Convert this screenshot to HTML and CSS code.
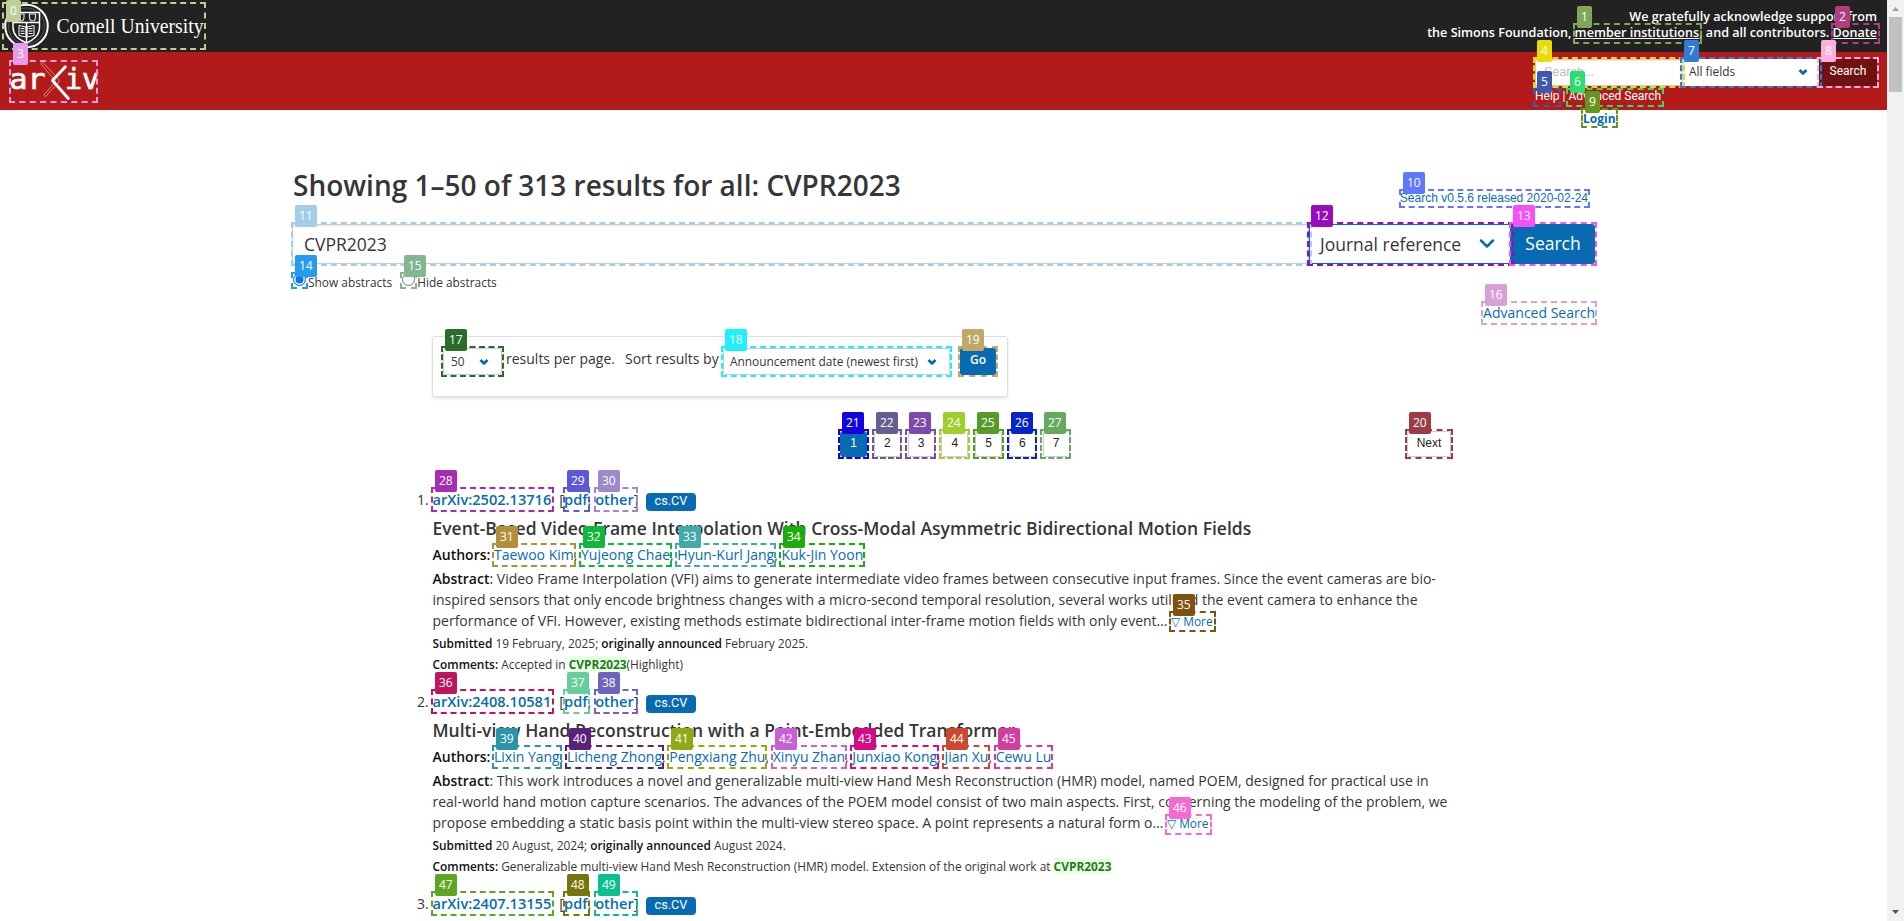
FILE: index.html
```html
<!DOCTYPE html>
<html lang="en">
<head>
<meta charset="utf-8">
<title>Search | arXiv e-print repository</title>
<link rel="stylesheet" href="styles.css">
</head>
<body>
<div class="viewport">
<div class="page">
  <header class="top-bar">
    <svg class="cornell" width="204" height="48" viewBox="2 2 204 48" role="img" aria-label="Cornell University">
      <circle cx="26.500" cy="26" r="21.300" fill="none" stroke="#fff" stroke-width="2"/>
      <circle cx="26.500" cy="26" r="18" fill="none" stroke="#666" stroke-width=".7"/>
      <path d="M13 12.500H39.500V27C39.500 36 33 40 26.500 43C19 40 13 36 13 27Z" fill="none" stroke="#fff" stroke-width="1.500"/>
      <path d="M13 22.500H39.500M26.500 23V43" stroke="#fff" stroke-width="1.500"/>
      <path d="M18 14h6v3q0 4-3 4t-3-4zM29.500 14h6v3q0 4-3 4t-3-4z" fill="none" stroke="#ddd" stroke-width="1.200"/>
      <path d="M19 25.500L26 27V37L19 35.500ZM34 25.500L27 27V37L34 35.500Z" fill="none" stroke="#fff"/>
      <path d="M20.500 28.500h4M20.500 31h4M20.500 33.500h4M28.500 28.500h4M28.500 31h4M28.500 33.500h4" stroke="#fff"/>
      <text x="56.500" y="33" textLength="147" lengthAdjust="spacingAndGlyphs" class="cornell-name">Cornell University</text>
    </svg>
    <p class="sponsors">We gratefully acknowledge support from<br>the Simons Foundation, <a href="#">member institutions</a>, and all contributors. <a href="#">Donate</a></p>
  </header>
  <div class="brand-bar">
    <svg class="arxiv" width="90" height="44" viewBox="9 60 90 44" role="img" aria-label="arXiv">
      <text x="9.500" y="88.500" textLength="36" lengthAdjust="spacingAndGlyphs" class="arxiv-name">ar</text>
      <text x="65" y="88.500" textLength="34" lengthAdjust="spacingAndGlyphs" class="arxiv-name">iv</text>
      <path d="M40.700 63.500L42.700 62.300L59.300 80L58.800 82L45.500 96.700L43.800 95.300L55.500 81.500Z" fill="none" stroke="#e59a9a" stroke-width=".8"/>
      <path d="M65.300 66.700L52.500 80.500L68.300 98.500" fill="none" stroke="#fff" stroke-width="2.900" stroke-linecap="round" stroke-linejoin="round"/>
    </svg>
    <form class="mini-search">
      <div class="mini-fields">
        <span class="mini-input">Search...</span>
        <span class="mini-select">All fields<svg width="10" height="8" viewBox="0 0 10 8"><path d="M1.500 2L5 5.500L8.500 2" class="chevron small"/></svg></span>
        <span class="mini-button">Search</span>
      </div>
      <p class="mini-help"><a href="#">Help</a> | <a href="#">Advanced Search</a></p>
    </form>
  </div>
  <div class="login"><a href="#">Login</a></div>

  <main class="container">
    <div class="heading">
      <h1>Showing 1–50 of 313 results for all: CVPR2023</h1>
      <a class="version" href="#">Search v0.5.6 released 2020-02-24</a>
    </div>
    <div class="search-row">
      <span class="query">CVPR2023</span>
      <span class="field-select">Journal reference<svg width="16" height="10" viewBox="0 0 16 10"><path d="M2 1.500L8 7.500L14 1.500" class="chevron"/></svg></span>
      <span class="search-button">Search</span>
    </div>
    <div class="options">
      <div class="radios">
        <span class="radio checked"></span><span class="show">Show abstracts</span>
        <span class="radio"></span><span>Hide abstracts</span>
      </div>
      <a class="advanced" href="#">Advanced Search</a>
    </div>

    <section class="results">
      <div class="sort-box">
        <span class="select per-page">50<svg width="10" height="8" viewBox="0 0 10 8"><path d="M1.500 2L5 5.500L8.500 2" class="chevron small"/></svg></span>
        <span class="sort-text per">results per page.</span>
        <span class="sort-text by">Sort results by</span>
        <span class="select order">Announcement date (newest first)<svg width="10" height="8" viewBox="0 0 10 8"><path d="M1.500 2L5 5.500L8.500 2" class="chevron small"/></svg></span>
        <span class="go">Go</span>
      </div>
      <nav class="pagination">
        <div class="pages">
          <a class="current">1</a><a>2</a><a>3</a><a>4</a><a>5</a><a>6</a><a>7</a>
        </div>
        <a class="next">Next</a>
      </nav>

      <article class="result">
        <span class="num">1.</span>
        <p class="ids"><a href="#">arXiv:2502.13716</a><span class="formats">[<a href="#">pdf</a>, <a href="#">other</a>]</span><span class="tag">cs.CV</span></p>
        <h2>Event-Based Video Frame Interpolation With Cross-Modal Asymmetric Bidirectional Motion Fields</h2>
        <p class="authors"><b>Authors:</b> <a href="#">Taewoo Kim</a>, <a href="#">Yujeong Chae</a>, <a href="#">Hyun-Kurl Jang</a>, <a href="#">Kuk-Jin Yoon</a></p>
        <p class="abstract"><b>Abstract</b>: Video Frame Interpolation (VFI) aims to generate intermediate video frames between consecutive input frames. Since the event cameras are bio-<br>inspired sensors that only encode brightness changes with a micro-second temporal resolution, several works utilized the event camera to enhance the<br>performance of VFI. However, existing methods estimate bidirectional inter-frame motion fields with only event… <a class="more" href="#">▽ More</a></p>
        <p class="meta"><b>Submitted</b> 19 February, 2025; <b>originally announced</b> February 2025.</p>
        <p class="meta"><b>Comments:</b> Accepted in <mark>CVPR2023</mark>(Highlight)</p>
      </article>

      <article class="result">
        <span class="num">2.</span>
        <p class="ids"><a href="#">arXiv:2408.10581</a><span class="formats">[<a href="#">pdf</a>, <a href="#">other</a>]</span><span class="tag">cs.CV</span></p>
        <h2>Multi-view Hand Reconstruction with a Point-Embedded Transformer</h2>
        <p class="authors"><b>Authors:</b> <a href="#">Lixin Yang</a>, <a href="#">Licheng Zhong</a>, <a href="#">Pengxiang Zhu</a>, <a href="#">Xinyu Zhan</a>, <a href="#">Junxiao Kong</a>, <a href="#">Jian Xu</a>, <a href="#">Cewu Lu</a></p>
        <p class="abstract"><b>Abstract</b>: This work introduces a novel and generalizable multi-view Hand Mesh Reconstruction (HMR) model, named POEM, designed for practical use in<br>real-world hand motion capture scenarios. The advances of the POEM model consist of two main aspects. First, concerning the modeling of the problem, we<br>propose embedding a static basis point within the multi-view stereo space. A point represents a natural form o… <a class="more" href="#">▽ More</a></p>
        <p class="meta"><b>Submitted</b> 20 August, 2024; <b>originally announced</b> August 2024.</p>
        <p class="meta"><b>Comments:</b> Generalizable multi-view Hand Mesh Reconstruction (HMR) model. Extension of the original work at <mark>CVPR2023</mark></p>
      </article>

      <article class="result">
        <span class="num">3.</span>
        <p class="ids"><a href="#">arXiv:2407.13155</a><span class="formats">[<a href="#">pdf</a>, <a href="#">other</a>]</span><span class="tag">cs.CV</span></p>
      </article>
    </section>
  </main>
</div>
<div class="scrollbar">
  <svg width="17" height="17" viewBox="0 0 17 17"><path d="M8.500 7L12 11H5Z" fill="#a3a3a3"/></svg>
  <span class="thumb"></span>
  <svg class="down" width="17" height="17" viewBox="0 0 17 17"><path d="M5 6H12L8.500 10Z" fill="#505050"/></svg>
</div>
</div>
<div class="marks" id="marks"></div>
<script src="marks.js"></script>
</body>
</html>
```
FILE: styles.css
```css
* { box-sizing: border-box; }
html, body { height: 921px; }
body { position: relative; margin: 0; background: #fff; color: #363636; font: 14px/21px "Open Sans", sans-serif; overflow: hidden; }
p, h1, h2 { margin: 0; }
a { color: #086bb1; text-decoration: none; }
b { font-weight: 600; color: #111; }
svg { display: block; overflow: visible; }

.viewport { display: flex; height: 921px; overflow: hidden; }
.page { width: 1887px; height: 921px; flex: none; overflow: hidden; }

.top-bar { display: flex; justify-content: space-between; height: 52px; padding: 2px 10px 0 2px; background: #222; }
.cornell-name { font: 22px "Liberation Serif", serif; fill: #fff; }
.sponsors { padding-top: 7px; color: #fff; font-size: 12.600px; line-height: 16px; font-weight: 600; text-align: right; white-space: nowrap; }
.sponsors a { color: #fff; text-decoration: underline; }

.brand-bar { display: flex; justify-content: space-between; height: 58px; padding: 7px 10px 0 9px; background: #b31b1b; }
.arxiv { margin-top: 1px; }
.arxiv-name { font: 28px "DejaVu Sans Mono", monospace; fill: #fff; stroke: #fff; stroke-width: .7; }
.mini-search { width: 342px; }
.mini-fields { display: flex; height: 27px; }
.mini-input { width: 148px; padding: 2px 8px; background: #fff; border: 1px solid #ccc; color: #bbb; font: 12.500px/21px "Liberation Sans", sans-serif; box-shadow: inset 0 1px 2px rgba(10,10,10,.1); }
.mini-select { display: flex; align-items: center; justify-content: space-between; width: 136px; padding: 0 11px 2px 6px; background: #fff; font-size: 11.900px; }
.mini-button { width: 58px; background: #6f1111; color: #fff; font: 12px/24px Roboto, sans-serif; text-align: center; }
.mini-help { padding-top: 2px; color: #fff; font: 12px/17px Roboto, sans-serif; }
.mini-help a { color: #fff; }
.login { height: 50px; padding-left: 1583px; font-size: 12px; line-height: 17px; font-weight: 700; }

.chevron { fill: none; stroke: #086bb1; stroke-width: 2.500; stroke-linecap: round; stroke-linejoin: round; }
.chevron.small { stroke-width: 2.700; stroke-linecap: butt; }

.container { width: 1303px; margin-left: 292px; }
.heading { display: flex; justify-content: space-between; height: 64px; padding-right: 7px; }
h1 { padding: 7px 0 0 1px; font-size: 28px; line-height: 36px; font-weight: 600; white-space: nowrap; }
.version { padding-top: 30px; font: 12px/16px "Liberation Sans", sans-serif; }
.search-row { display: flex; height: 40px; font-size: 17.500px; line-height: 38px; }
.query { width: 1017px; padding: 0 11px; border: 1px solid #ccc; border-radius: 3px 0 0 3px; box-shadow: inset 0 1px 2px rgba(10,10,10,.1); }
.field-select { display: flex; align-items: center; justify-content: space-between; width: 202px; padding: 0 15px 0 10px; border: 1px solid #086bb1; }
.search-button { width: 84px; background: #086bb1; border-radius: 0 3px 3px 0; color: #fff; text-align: center; }
.options { display: flex; justify-content: space-between; height: 72px; }
.radios { display: flex; align-items: center; height: 18px; margin-top: 9px; font-size: 11.900px; }
.radio { width: 13px; height: 13px; margin: -5px 2px 0 1px; border: 1px solid #767676; border-radius: 50%; background: #fff; }
.radio.checked { border-color: #0075ff; background: #0075ff; box-shadow: inset 0 0 0 1.500px #fff; }
.show { margin-right: 9px; }
.advanced { padding-top: 38px; }

.results { width: 1020px; margin-left: 140px; }
.sort-box { display: flex; align-items: flex-start; width: 576px; height: 61px; padding: 11px 9px 0 10px; border: 1px solid #ddd; border-radius: 3px; box-shadow: 0 2px 3px rgba(10,10,10,.1); white-space: nowrap; }
.select { display: flex; align-items: center; justify-content: space-between; height: 27px; border: 1px solid #ccc; border-radius: 3px; font-size: 11.900px; }
.per-page { width: 59px; padding: 0 12px 0 7px; }
.order { width: 227px; padding: 0 12px 0 6px; }
.per { width: 123px; padding-left: 4px; }
.by { width: 98px; }
.go { width: 36px; height: 27px; margin-left: 10px; background: #086bb1; border-radius: 2px; color: #fff; font-size: 12px; line-height: 24px; font-weight: 600; text-align: center; }
.pagination { display: flex; justify-content: space-between; height: 92px; padding: 34px 0 0 408px; font: 12px/20px "Liberation Sans", sans-serif; }
.pages { display: flex; gap: 6.750px; }
.pages a, .next { width: 27px; height: 26px; padding-top: 1px; border: 1px solid #ccc; border-radius: 3px; color: #222; text-align: center; }
.pages .current { background: #086bb1; border-color: #086bb1; color: #fff; }
.next { width: 44px; margin-right: 1px; }

.result { position: relative; width: 1040px; height: 202px; padding-left: .5px; white-space: nowrap; }
.num { position: absolute; left: -15px; top: 0; }
.ids { display: flex; height: 21px; font-size: 14.600px; }
.ids a { font-weight: 600; }
.formats { margin-left: 8px; }
.tag { height: 18px; margin: 4px 0 0 7px; padding: 0 9px; background: #086bb1; border-radius: 4px; color: #fff; font: 12.600px/16px Roboto, sans-serif; }
h2 { height: 34px; padding-top: 6px; font-size: 17.500px; line-height: 24px; font-weight: 600; }
.authors { height: 24px; }
.abstract { height: 65px; }
.more, .meta { font-size: 11.900px; }
mark { background: #ebffe5; color: #1e7b1e; font-weight: 700; }

.scrollbar { display: flex; flex-direction: column; align-items: center; width: 17px; background: #f1f1f1; }
.thumb { width: 13px; height: 75px; background: #c1c1c1; }
.down { margin-top: auto; }

.marks { position: absolute; inset: 0; overflow: hidden; pointer-events: none; }
.mark { position: absolute; border: 2px dashed; }
.mark-label { position: absolute; padding: 2px 4px; border-radius: 2px; color: #fff; font-size: 12px; line-height: 18px; }
```
FILE: marks.js
```js
// Numbered outlines of the interactive elements: [left, top, right, bottom, colour]
const marks = [
  [2, 2, 206, 50, '#bccf98'],
  [1573, 23, 1702, 44, '#7fa758'],
  [1831, 23, 1880, 44, '#b23d7e'],
  [9, 60, 98, 103, '#e99aeb'],
  [1533, 57, 1685, 88, '#e8db08'],
  [1533, 88, 1561, 107, '#4059af'],
  [1566, 88, 1664, 107, '#2ddc71'],
  [1680, 57, 1822, 88, '#307bd8'],
  [1817, 57, 1879, 88, '#fdafdd'],
  [1581, 108, 1618, 128, '#66951f'],
  [1399, 189, 1590, 208, '#6077ff'],
  [291, 222, 1312, 266, '#a4cdec'],
  [1307, 222, 1514, 266, '#970cbd'],
  [1509, 222, 1597, 266, '#f650f8'],
  [291, 272, 308, 289, '#249bf0'],
  [400, 272, 417, 289, '#83b792'],
  [1481, 301, 1597, 325, '#daa0d5'],
  [441, 346, 504, 377, '#2a6c2c'],
  [721, 346, 952, 377, '#1ef0fc'],
  [958, 346, 998, 377, '#c1a869'],
  [1405, 429, 1453, 459, '#9d3b46'],
  [838, 429, 869, 459, '#1203df'],
  [872, 429, 902, 459, '#665d91'],
  [905, 429, 936, 459, '#7d4aaa'],
  [939, 429, 970, 459, '#9fcf2f'],
  [973, 429, 1004, 459, '#559b2a'],
  [1007, 429, 1037, 459, '#0423c8'],
  [1040, 429, 1071, 459, '#65a95c'],
  [431, 487, 554, 512, '#a62db2'],
  [563, 487, 590, 512, '#5b59d8'],
  [594, 487, 638, 512, '#9d8aca'],
  [492, 543, 576, 567, '#b28f38'],
  [579, 543, 672, 567, '#11b73a'],
  [675, 543, 776, 567, '#42aaa8'],
  [779, 543, 865, 567, '#1dad0b'],
  [1169, 611, 1216, 632, '#80520f'],
  [431, 689, 554, 714, '#bd165c'],
  [563, 689, 590, 714, '#67cd9d'],
  [594, 689, 638, 714, '#6d64bf'],
  [492, 745, 562, 769, '#2d94a7'],
  [565, 745, 664, 769, '#5b217b'],
  [667, 745, 767, 769, '#93a815'],
  [771, 745, 847, 769, '#c85fd6'],
  [850, 745, 939, 769, '#d20b87'],
  [942, 745, 990, 769, '#ca4a31'],
  [994, 745, 1053, 769, '#d43d9f'],
  [1165, 814, 1212, 835, '#f46bd3'],
  [431, 891, 554, 916, '#5ba720'],
  [563, 891, 590, 916, '#75750a'],
  [594, 891, 638, 916, '#0cbf8d']
];

const layer = document.getElementById('marks');

marks.forEach(([left, top, right, bottom, color], index) => {
  const box = document.createElement('div');
  box.className = 'mark';
  box.style.cssText = `left:${left}px;top:${top}px;width:${right - left}px;height:${bottom - top}px;border-color:${color}`;
  const label = document.createElement('span');
  label.className = 'mark-label';
  label.textContent = index;
  label.style.cssText = `left:${left + 4}px;top:${Math.max(0, top - 17)}px;background:${color}`;
  layer.append(box, label);
});
```
